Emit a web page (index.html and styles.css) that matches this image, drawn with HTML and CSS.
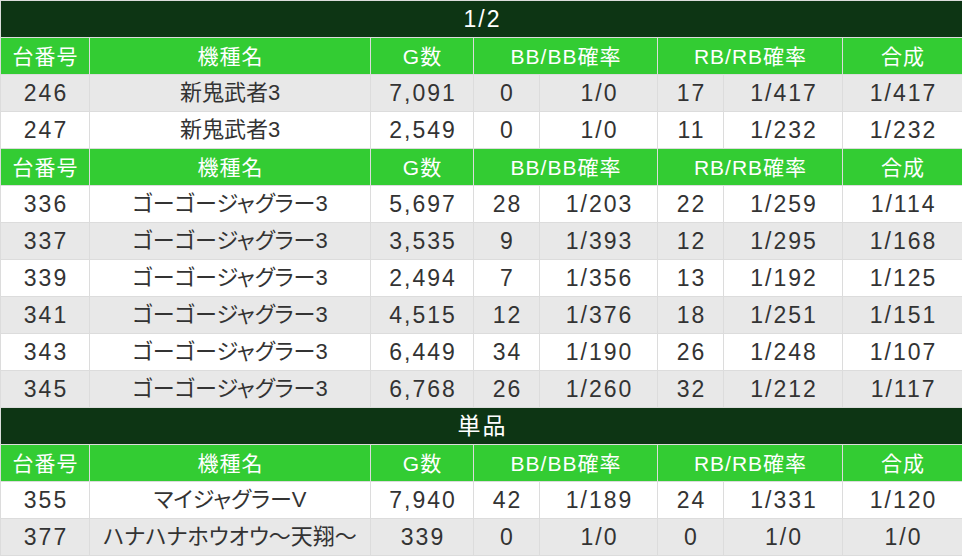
FILE: index.html
```html
<!DOCTYPE html>
<html lang="ja">
<head>
<meta charset="utf-8">
<link rel="stylesheet" href="styles.css">
</head>
<body>
<table class="data">
<colgroup>
<col class="c1"><col class="c2"><col class="c3"><col class="c4"><col class="c5"><col class="c6"><col class="c7"><col class="c8">
</colgroup>
<tbody>
<tr class="title"><td colspan="8">1/2</td></tr>
<tr class="head"><td>台番号</td><td>機種名</td><td>G数</td><td colspan="2">BB/BB確率</td><td colspan="2">RB/RB確率</td><td>合成</td></tr>
<tr class="odd"><td>246</td><td class="name">新鬼武者3</td><td>7,091</td><td>0</td><td>1/0</td><td>17</td><td>1/417</td><td>1/417</td></tr>
<tr><td>247</td><td class="name">新鬼武者3</td><td>2,549</td><td>0</td><td>1/0</td><td>11</td><td>1/232</td><td>1/232</td></tr>
<tr class="head"><td>台番号</td><td>機種名</td><td>G数</td><td colspan="2">BB/BB確率</td><td colspan="2">RB/RB確率</td><td>合成</td></tr>
<tr><td>336</td><td class="name">ゴーゴージャグラー3</td><td>5,697</td><td>28</td><td>1/203</td><td>22</td><td>1/259</td><td>1/114</td></tr>
<tr class="odd"><td>337</td><td class="name">ゴーゴージャグラー3</td><td>3,535</td><td>9</td><td>1/393</td><td>12</td><td>1/295</td><td>1/168</td></tr>
<tr><td>339</td><td class="name">ゴーゴージャグラー3</td><td>2,494</td><td>7</td><td>1/356</td><td>13</td><td>1/192</td><td>1/125</td></tr>
<tr class="odd"><td>341</td><td class="name">ゴーゴージャグラー3</td><td>4,515</td><td>12</td><td>1/376</td><td>18</td><td>1/251</td><td>1/151</td></tr>
<tr><td>343</td><td class="name">ゴーゴージャグラー3</td><td>6,449</td><td>34</td><td>1/190</td><td>26</td><td>1/248</td><td>1/107</td></tr>
<tr class="odd"><td>345</td><td class="name">ゴーゴージャグラー3</td><td>6,768</td><td>26</td><td>1/260</td><td>32</td><td>1/212</td><td>1/117</td></tr>
<tr class="title"><td colspan="8">単品</td></tr>
<tr class="head"><td>台番号</td><td>機種名</td><td>G数</td><td colspan="2">BB/BB確率</td><td colspan="2">RB/RB確率</td><td>合成</td></tr>
<tr><td>355</td><td class="name">マイジャグラーV</td><td>7,940</td><td>42</td><td>1/189</td><td>24</td><td>1/331</td><td>1/120</td></tr>
<tr class="odd"><td>377</td><td class="name">ハナハナホウオウ〜天翔〜</td><td>339</td><td>0</td><td>1/0</td><td>0</td><td>1/0</td><td>1/0</td></tr>
</tbody>
</table>
</body>
</html>
```
FILE: styles.css
```css
html, body {
  margin: 0;
  padding: 0;
  background: #ffffff;
}
.data {
  width: 962px;
  table-layout: fixed;
  border-collapse: collapse;
  font-family: "Liberation Sans", "Noto Sans CJK JP", sans-serif;
}
.c1 { width: 89px; }
.c2 { width: 281px; }
.c3 { width: 103px; }
.c4 { width: 66px; }
.c5 { width: 118px; }
.c6 { width: 66px; }
.c7 { width: 119px; }
.c8 { width: 120px; }
.data td {
  height: 36px;
  padding: 0 0 0 2px;
  border: 1px solid #dcdcdc;
  text-align: center;
  vertical-align: middle;
  font-size: 23px;
  letter-spacing: 2px;
  color: #333333;
  white-space: nowrap;
  overflow: hidden;
  line-height: 1;
}
.data td.name {
  font-size: 22px;
  letter-spacing: 0;
  padding-left: 0;
  font-feature-settings: "palt" 1;
}
.data tr.odd td {
  background: #e8e8e8;
}
.data tr.title td {
  background: #0d3514;
  color: #ffffff;
  font-size: 23px;
  letter-spacing: 2px;
}
.data tr.head td {
  background: #33cc33;
  color: #ffffff;
  font-size: 21px;
  letter-spacing: 1px;
  padding-left: 1px;
}
```
